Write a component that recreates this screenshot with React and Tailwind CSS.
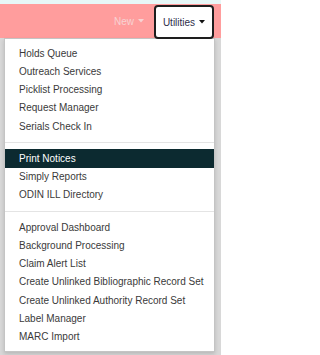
import React from "react";

const groups = [
    ["Holds Queue", "Outreach Services", "Picklist Processing", "Request Manager", "Serials Check In"],
    ["Print Notices", "Simply Reports", "ODIN ILL Directory"],
    [
        "Approval Dashboard",
        "Background Processing",
        "Claim Alert List",
        "Create Unlinked Bibliographic Record Set",
        "Create Unlinked Authority Record Set",
        "Label Manager",
        "MARC Import",
    ],
];

function Caret({ className }) {
    return (
        <svg width="6" height="4" viewBox="0 0 6 4" className={className}>
            <polygon points="0,0 6,0 3,3.5" fill="currentColor" />
        </svg>
    );
}

function MenuItem({ label, active }) {
    const base = "h-[18.25px] flex items-center pl-[14px] whitespace-nowrap";
    return (
        <div className={active ? base + " bg-[#0c2a30] text-white" : base + " text-[#3a3a3a]"}>
            {label}
        </div>
    );
}

export default function App() {
    return (
        <div className="w-[221px] h-[355px] overflow-hidden bg-[#d8d8d8] text-[10px] font-['Liberation_Sans',Arial,sans-serif]">
            <div className="h-[4px] bg-[#e7f7f7]" />
            <div className="h-[34px] bg-[#ff9d9d] flex justify-end items-start pr-[7px]">
                <div className="h-[34px] flex items-center gap-[4px] text-[#f7d3d3] mr-[10px]">
                    <span>New</span>
                    <Caret />
                </div>
                <button
                    type="button"
                    className="relative z-10 mt-[1px] h-[34px] w-[60px] flex items-center justify-center gap-[4px] bg-white border-2 border-[#1e1e1e] rounded-[4px] text-[#2e2e4a]"
                >
                    <span>Utilities</span>
                    <Caret className="text-[#111]" />
                </button>
            </div>
            <div className="ml-[4px] w-[211px] bg-white border border-[#c4c4c4] shadow-[0_2px_4px_rgba(0,0,0,0.15)] pt-[5px] pb-[5px]">
                {groups.map((items, gi) => (
                    <div key={gi}>
                        {gi > 0 && <div className="my-[6.5px] h-px bg-[#e4e4e4]" />}
                        {items.map((label) => (
                            <MenuItem key={label} label={label} active={label === "Print Notices"} />
                        ))}
                    </div>
                ))}
            </div>
        </div>
    );
}
